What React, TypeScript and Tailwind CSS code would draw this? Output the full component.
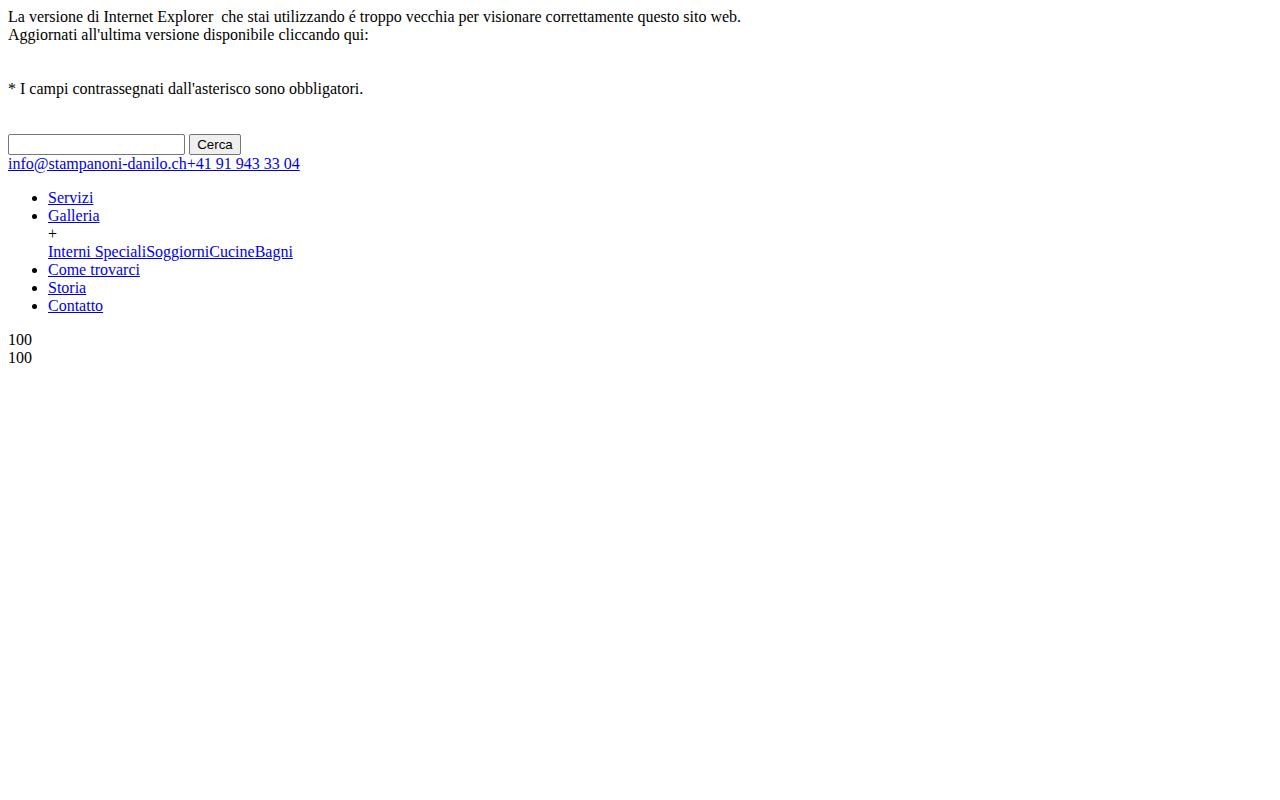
import { useState } from "react";

const menu = [
  { label: "Servizi" },
  {
    label: "Galleria",
    sub: ["Interni Speciali", "Soggiorni", "Cucine", "Bagni"],
  },
  { label: "Come trovarci" },
  { label: "Storia" },
  { label: "Contatto" },
];

function App() {
  const [query, setQuery] = useState("");

  return (
    <main className="p-2 font-['Liberation_Serif','Times_New_Roman',serif] text-[16px] leading-[18px] text-black bg-white min-h-screen">
      {/* old browser notice */}
      <div>
        La versione di Internet Explorer{"\u00a0"} che stai utilizzando é troppo vecchia per
        visionare correttamente questo sito web.
        <br />
        Aggiornati all'ultima versione disponibile cliccando qui:
      </div>

      <p className="mt-9">* I campi contrassegnati dall'asterisco sono obbligatori.</p>

      <form className="mt-9 flex items-center gap-1" onSubmit={(e) => e.preventDefault()}>
        <input
          type="text"
          value={query}
          onChange={(e) => setQuery(e.target.value)}
          className="w-[177px] h-[21px] border border-[#767676] rounded-[2px] px-0.5 text-[13.33px] font-['Liberation_Sans',Arial,sans-serif] bg-white"
        />
        <button
          type="submit"
          className="w-[52px] h-[21px] border border-[#767676] rounded-[2px] bg-[#efefef] text-[13.33px] leading-none font-['Liberation_Sans',Arial,sans-serif] text-black"
        >
          Cerca
        </button>
      </form>

      <div>
        <a href="#" className="text-[#0000ee] underline">
          info@stampanoni-danilo.ch
        </a>
        <a href="#" className="text-[#0000ee] underline">
          +41 91 943 33 04
        </a>
      </div>

      <ul className="my-4 pl-10 list-disc">
        {menu.map((item) => (
          <li key={item.label}>
            <a href="#" className="text-[#0000ee] underline">
              {item.label}
            </a>
            {item.sub && (
              <>
                <div>+</div>
                <div>
                  {item.sub.map((s) => (
                    <a key={s} href="#" className="text-[#0000ee] underline">
                      {s}
                    </a>
                  ))}
                </div>
              </>
            )}
          </li>
        ))}
      </ul>

      <div>100</div>
      <div>100</div>
    </main>
  );
}

export default App;
